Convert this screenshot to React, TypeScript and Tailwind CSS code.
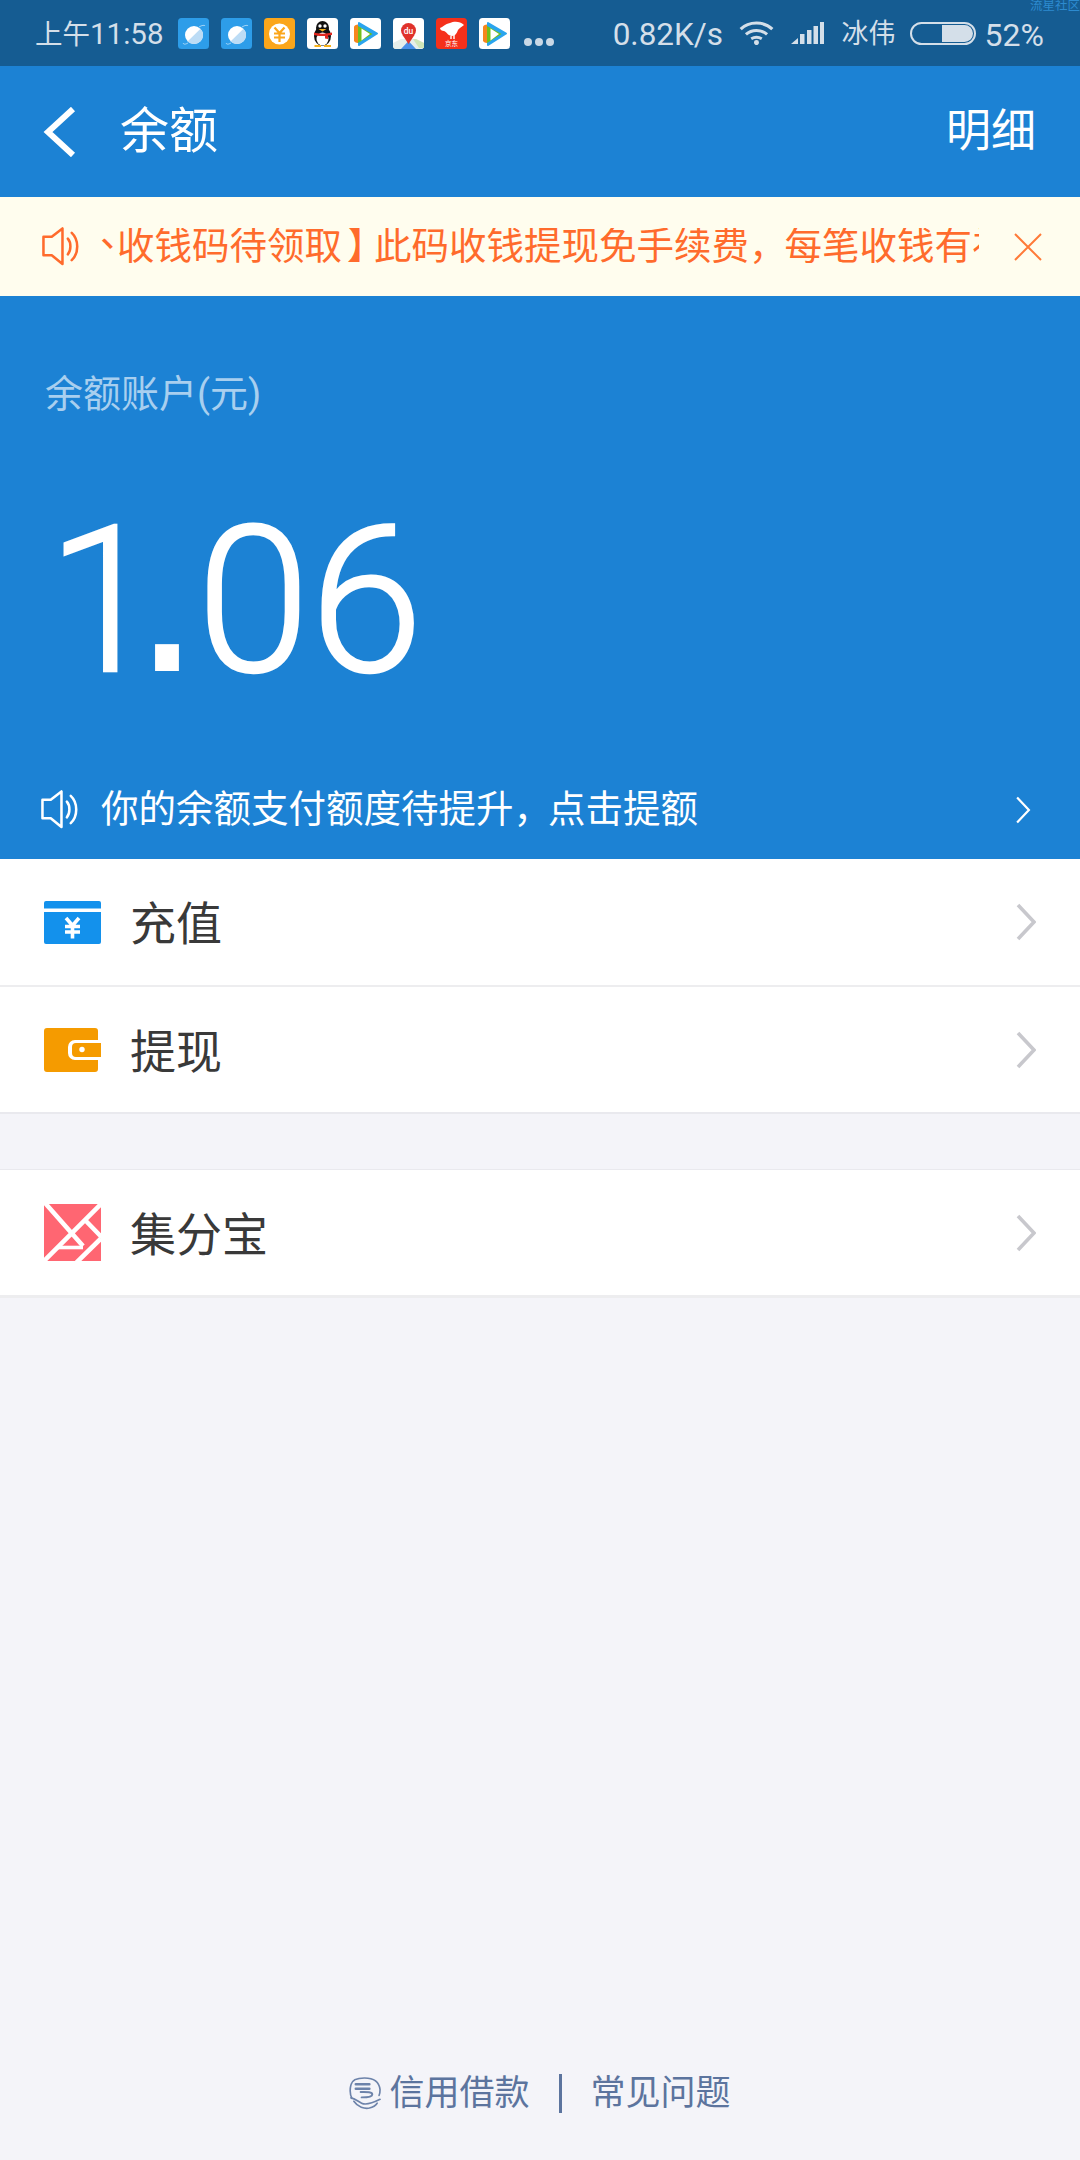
import React from "react";

const cjk = "font-['Roboto','Noto_Sans_CJK_SC',sans-serif]";

function Speaker({ color, className }: { color: string; className?: string }) {
  return (
    <svg viewBox="0 0 40 40" className={className} fill="none" stroke={color} strokeWidth="2.6" strokeLinejoin="round" strokeLinecap="round">
      <path d="M1.5 10 H10 L21 1.5 V38 L10 29 H1.5 Z" />
      <path d="M26.5 12 C30 16 30 24 26.5 28" />
      <path d="M30.5 6 C38 13 38 27 30.5 34" />
    </svg>
  );
}

function Chevron({ color, w = 3, className }: { color: string; w?: number; className?: string }) {
  return (
    <svg viewBox="0 0 20 38" className={className} fill="none" stroke={color} strokeWidth={w} strokeLinecap="butt">
      <path d="M2 2 L18 19 L2 36" />
    </svg>
  );
}

function NotifIcon({ children, bg }: { children?: React.ReactNode; bg: string }) {
  return (
    <svg viewBox="0 0 31 31" className="w-[31px] h-[31px] shrink-0">
      <rect width="31" height="31" rx="3.5" fill={bg} />
      {children}
    </svg>
  );
}

const Bubble = () => (
  <>
    <circle cx="16" cy="17" r="9" fill="#fff" />
    <path d="M9.5 23.5 L22.5 10.7 C26.5 15 25.5 21 22 23.8 C18 27 13 26.5 9.5 23.5 Z" fill="#bcdcf5" />
    <path d="M21 9 C24 7 27 7 27 8 M5 25 C6 27 8 26 10 25" stroke="#ffffff" strokeWidth="0.8" fill="none" opacity="0.7" />
  </>
);

const Tencent = () => (
  <>
    <path d="M4 9 C4 7.5 6 6.5 8 6.5 L8 25 C6 25 4 24 4 22.5 Z" fill="#f7861d" />
    <path d="M9 5 L27 15.5 L9 27 Z" fill="#2aa5ee" stroke="#2aa5ee" strokeWidth="2" strokeLinejoin="round" />
    <path d="M8 8 L22.5 16 L8 25 Z" fill="#72bf1c" />
    <path d="M11.5 10.5 L20 16 L11.5 22.5 Z" fill="#fff" />
  </>
);

function StatusIcons() {
  return (
    <div className="flex items-center gap-[12px] ml-[15px]">
      <NotifIcon bg="#2d9de9"><Bubble /></NotifIcon>
      <NotifIcon bg="#2d9de9"><Bubble /></NotifIcon>
      <NotifIcon bg="#fba61b">
        <circle cx="15.5" cy="16" r="10.5" fill="#fff" />
        <path d="M10.5 9.5 L15.5 15 L20.5 9.5 M10 15.5 H21 M10 19.5 H21 M15.5 15 V24" stroke="#fba61b" strokeWidth="2.2" fill="none" />
      </NotifIcon>
      <NotifIcon bg="#fff">
        <ellipse cx="15.5" cy="18" rx="8.5" ry="10" fill="#111" />
        <ellipse cx="15.5" cy="10" rx="6.5" ry="7" fill="#111" />
        <ellipse cx="15.5" cy="21" rx="6" ry="6.5" fill="#fff" />
        <path d="M7 14.5 C11 16 20 16 25 14.5 L25 17 L21 17.5 L21 21 L18 20.5 L18 18 C14 18 10 18 7 17 Z" fill="#e0281f" />
        <circle cx="13" cy="8" r="1.7" fill="#fff" />
        <circle cx="18" cy="8" r="1.7" fill="#fff" />
        <path d="M11.5 11 H19.5 L15.5 13.5 Z" fill="#f6b21a" />
        <path d="M7.5 28 H14 M17 28 H24" stroke="#f6b21a" strokeWidth="1.8" />
      </NotifIcon>
      <NotifIcon bg="#fff"><Tencent /></NotifIcon>
      <NotifIcon bg="#fff">
        <path d="M0 25 L8 21 H23 L31 25 V27.5 A3.5 3.5 0 0 1 27.5 31 H3.5 A3.5 3.5 0 0 1 0 27.5 Z" fill="#e6eeea" />
        <path d="M20 21 H23 L31 25 V30 H26 Z" fill="#cfe6b8" />
        <path d="M15.5 23 L23 31 H8 Z" fill="#4a90e8" />
        <circle cx="15.5" cy="12.5" r="7.5" fill="#e0322b" />
        <path d="M9.5 17 L15.5 26 L21.5 17 Z" fill="#e0322b" />
        <text x="15.5" y="15.5" fontSize="8.5" textAnchor="middle" fill="#fff" fontFamily="Roboto" fontWeight="500">du</text>
      </NotifIcon>
      <NotifIcon bg="#f5301a">
        <path d="M4 10 C7 9 9 6 14 5 C18 3 24 3 28 7 C26 9 23 10 22 12 C21 15 19 18 16 18 C12 18 11 14 8 13 C6 13 4 12 4 10 Z" fill="#fff" />
        <path d="M15 18 V21 M18 17 V21" stroke="#fff" strokeWidth="1.4" />
        <text x="15.5" y="28" fontSize="6.5" textAnchor="middle" fill="#fff" fontFamily="'Noto Sans CJK SC'">京东</text>
      </NotifIcon>
      <NotifIcon bg="#fff"><Tencent /></NotifIcon>
      <div className="flex gap-[3px] ml-[2px] mt-[18px]">
        <span className="w-[8px] h-[8px] rounded-full bg-[#c9d8e6]" />
        <span className="w-[8px] h-[8px] rounded-full bg-[#c9d8e6]" />
        <span className="w-[8px] h-[8px] rounded-full bg-[#c9d8e6]" />
      </div>
    </div>
  );
}

function RightStatus() {
  return (
    <div className="flex items-center">
      <span className="text-[31.5px] leading-none pt-[3px]">0.82K/s</span>
      <svg viewBox="0 0 36 25" className="w-[35px] h-[24px] ml-[15.5px]" fill="none" stroke="#d4dfe9" strokeWidth="3.2">
        <path d="M1.5 8.5 C10 0 26 0 34.5 8.5" />
        <path d="M7 14 C13 8.5 23 8.5 29 14" />
        <path d="M12.5 18.5 C16 16.5 20 16.5 23.5 18.5" />
        <circle cx="18" cy="22.5" r="2.6" fill="#d4dfe9" stroke="none" />
      </svg>
      <svg viewBox="0 0 33 22" className="w-[33px] h-[22px] ml-[17px]" fill="#d4dfe9">
        <path d="M0 22 L7 16 V22 Z" />
        <rect x="9" y="12" width="4.5" height="10" />
        <rect x="16" y="8" width="4.5" height="14" />
        <rect x="22.5" y="4" width="4.5" height="18" />
        <rect x="29" y="0" width="4" height="22" />
      </svg>
      <span className="text-[27px] leading-none ml-[18px] pt-[3px]">冰伟</span>
      <div className="w-[66px] h-[23px] ml-[14px] rounded-full border-[2px] border-[#d4dfe9] p-[1px] flex justify-end">
        <div className="w-[31px] h-full bg-[#d4dfe9] rounded-r-full" />
      </div>
      <span className="text-[32px] leading-none ml-[9px] pt-[3px]">52%</span>
    </div>
  );
}

function Row({ icon, label, h }: { icon: React.ReactNode; label: string; h: string }) {
  return (
    <div className={`${h} bg-white flex items-center pl-[44px] pr-[44px] shrink-0`}>
      <div className="w-[57px] h-[57px] flex items-center justify-center">{icon}</div>
      <span className="ml-[29px] pt-[4px] text-[46px] leading-none text-[#393939]">{label}</span>
      <Chevron color="#c8c8cd" w={3.6} className="w-[20px] h-[38px] ml-auto" />
    </div>
  );
}

const Card = (
  <svg viewBox="0 0 57 43" className="w-[57px] h-[43px]">
    <path d="M2 0 H55 A2 2 0 0 1 57 2 V7.5 H0 V2 A2 2 0 0 1 2 0 Z" fill="#1391ec" />
    <path d="M0 11 H57 V41 A2 2 0 0 1 55 43 H2 A2 2 0 0 1 0 41 Z" fill="#1391ec" />
    <path d="M22 17 L28.5 24.5 L35 17 M21 25.5 H36 M21 31 H36 M28.5 24 V37.5" stroke="#fff" strokeWidth="3.6" fill="none" />
  </svg>
);

const Wallet = (
  <svg viewBox="0 0 57 44" className="w-[57px] h-[44px]">
    <path d="M3 0 H51 A3 3 0 0 1 54 3 V12 H31 A7 7 0 0 0 24 19 V25 A7 7 0 0 0 31 32 H54 V41 A3 3 0 0 1 51 44 H3 A3 3 0 0 1 0 41 V3 A3 3 0 0 1 3 0 Z" fill="#f59b00" />
    <path d="M32 15 H57 V29 H32 A4 4 0 0 1 28 25 V19 A4 4 0 0 1 32 15 Z" fill="#f59b00" />
    <circle cx="38" cy="21.5" r="2.7" fill="#fff" />
  </svg>
);

const Jifen = (
  <svg viewBox="0 0 57 57" className="w-[57px] h-[57px]">
    <rect width="57" height="57" fill="#ff6672" />
    <path d="M1 -1 L39 42 M-1 58 L58 -1 M41 16 L58 33.5 M58 33.5 L32 59" stroke="#fff" strokeWidth="4.6" fill="none" />
    <path d="M14 43.5 H39" stroke="#fff" strokeWidth="3.6" fill="none" />
  </svg>
);

export default function App() {
  return (
    <div className={`w-[1080px] h-[2160px] bg-[#f4f4f9] flex flex-col overflow-hidden relative ${cjk}`}>
      <span className="absolute top-0 right-0 text-[12.5px] leading-none text-[#2d8bd0]">流星社区</span>

      <div className="h-[66px] bg-[#155c92] flex items-center justify-between pl-[35px] pr-[36px] text-[#d4dfe9] shrink-0">
        <div className="flex items-center">
          <span className="leading-none whitespace-nowrap pt-[3px]">
            <span className="text-[27.5px]">上午</span>
            <span className="text-[29.5px]">11:58</span>
          </span>
          <StatusIcons />
        </div>
        <RightStatus />
      </div>

      <div className="h-[131px] bg-[#1c82d4] flex items-center pl-[42px] pr-[44px] text-white shrink-0">
        <svg viewBox="0 0 34 50" className="w-[34px] h-[50px]" fill="none" stroke="#fff" strokeWidth="6">
          <path d="M31 2 L6 25 L31 48" />
        </svg>
        <span className="ml-[44px] text-[49px] leading-none">余额</span>
        <span className="ml-auto text-[45px] leading-none">明细</span>
      </div>

      <div className="h-[99px] bg-[#fffdee] flex items-center pl-[42px] text-[#ff6b2c] shrink-0">
        <Speaker color="#ff6b2c" className="w-[39px] h-[39px] shrink-0" />
        <div className="ml-[16px] w-[882px] overflow-hidden whitespace-nowrap flex">
          <span className="inline-block w-[20px] shrink-0 text-[37.5px] leading-none -translate-y-[13px] translate-x-[3px]">、</span>
          <span className="text-[37.5px] leading-none shrink-0">
            收钱码待领取<span className="inline-block w-[32px] translate-x-[5px]">】</span>此码收钱提现免手续费<span className="inline-block w-[35.5px]">，</span>每笔收钱有礼
          </span>
        </div>
        <svg viewBox="0 0 28 28" className="w-[28px] h-[28px] ml-[35px]" stroke="#ff7a38" strokeWidth="2" fill="none">
          <path d="M1 1 L27 27 M27 1 L1 27" />
        </svg>
      </div>

      <div className="h-[563px] bg-[#1c82d4] flex flex-col shrink-0 text-white">
        <div className="mt-[76px] pl-[45px] text-[38px] leading-[44px] text-[#a8cfef]">余额账户(元)</div>
        <div className="mt-[44px] pl-[47px] flex items-baseline leading-none text-[204px] font-light font-['Roboto',sans-serif] [-webkit-text-stroke:2.5px_#fff]">
          <span>1</span>
          <span className="text-[250px] font-normal font-['Liberation_Sans',sans-serif] -ml-[28px] -mr-[5px] [-webkit-text-stroke:0]">.</span>
          <span>06</span>
        </div>
        <div className="mt-auto h-[99px] flex items-center pl-[41px] pr-[44px]">
          <Speaker color="#fff" className="w-[39px] h-[39px] shrink-0" />
          <span className="ml-[21px] text-[37.5px] leading-none whitespace-nowrap">
            你的余额支付额度待提升<span className="inline-block w-[34.5px]">，</span>点击提额
          </span>
          <Chevron color="#fff" w={3} className="w-[16px] h-[28px] ml-auto mr-[5px]" />
        </div>
      </div>

      <Row h="h-[126px]" icon={Card} label="充值" />
      <div className="h-[2px] bg-[#ededef] shrink-0" />
      <Row h="h-[125px]" icon={Wallet} label="提现" />
      <div className="h-[2px] bg-[#e9e9ee] shrink-0" />

      <div className="h-[55px] shrink-0" />
      <div className="h-px bg-[#e9e9ee] shrink-0" />
      <Row h="h-[125px]" icon={Jifen} label="集分宝" />
      <div className="h-[3px] bg-[#ededef] shrink-0" />

      <div className="absolute bottom-[47px] left-0 right-0 flex items-center justify-center text-[35px] leading-none text-[#5c749e]">
        <svg viewBox="0 0 34 34" className="w-[33px] h-[33px] mr-[7px]" fill="none" stroke="#6d83aa" strokeWidth="1.7" strokeLinecap="round">
          <path d="M3 22 C1 18 1 12 2 8 C3 3 8 1 16 1 C25 1 31 4 32 13 C32 15 32 17 31 19" />
          <path d="M7 7.5 H21 M7 12 H21" strokeWidth="2.6" />
          <path d="M12 15.5 C17 15.5 24 15 24 18 C24 21 17 21 13 21" strokeWidth="2" />
          <path d="M2 21.5 C6 22 9 25 13 27 C17 29 24 27 32 23" />
          <path d="M5 25 C9 31 16 33 21 32 C25 31 27 30 29 27" />
        </svg>
        <span>信用借款</span>
        <span className="w-[3px] h-[39px] bg-[#5c749e] mx-[29px]" />
        <span>常见问题</span>
      </div>
    </div>
  );
}
